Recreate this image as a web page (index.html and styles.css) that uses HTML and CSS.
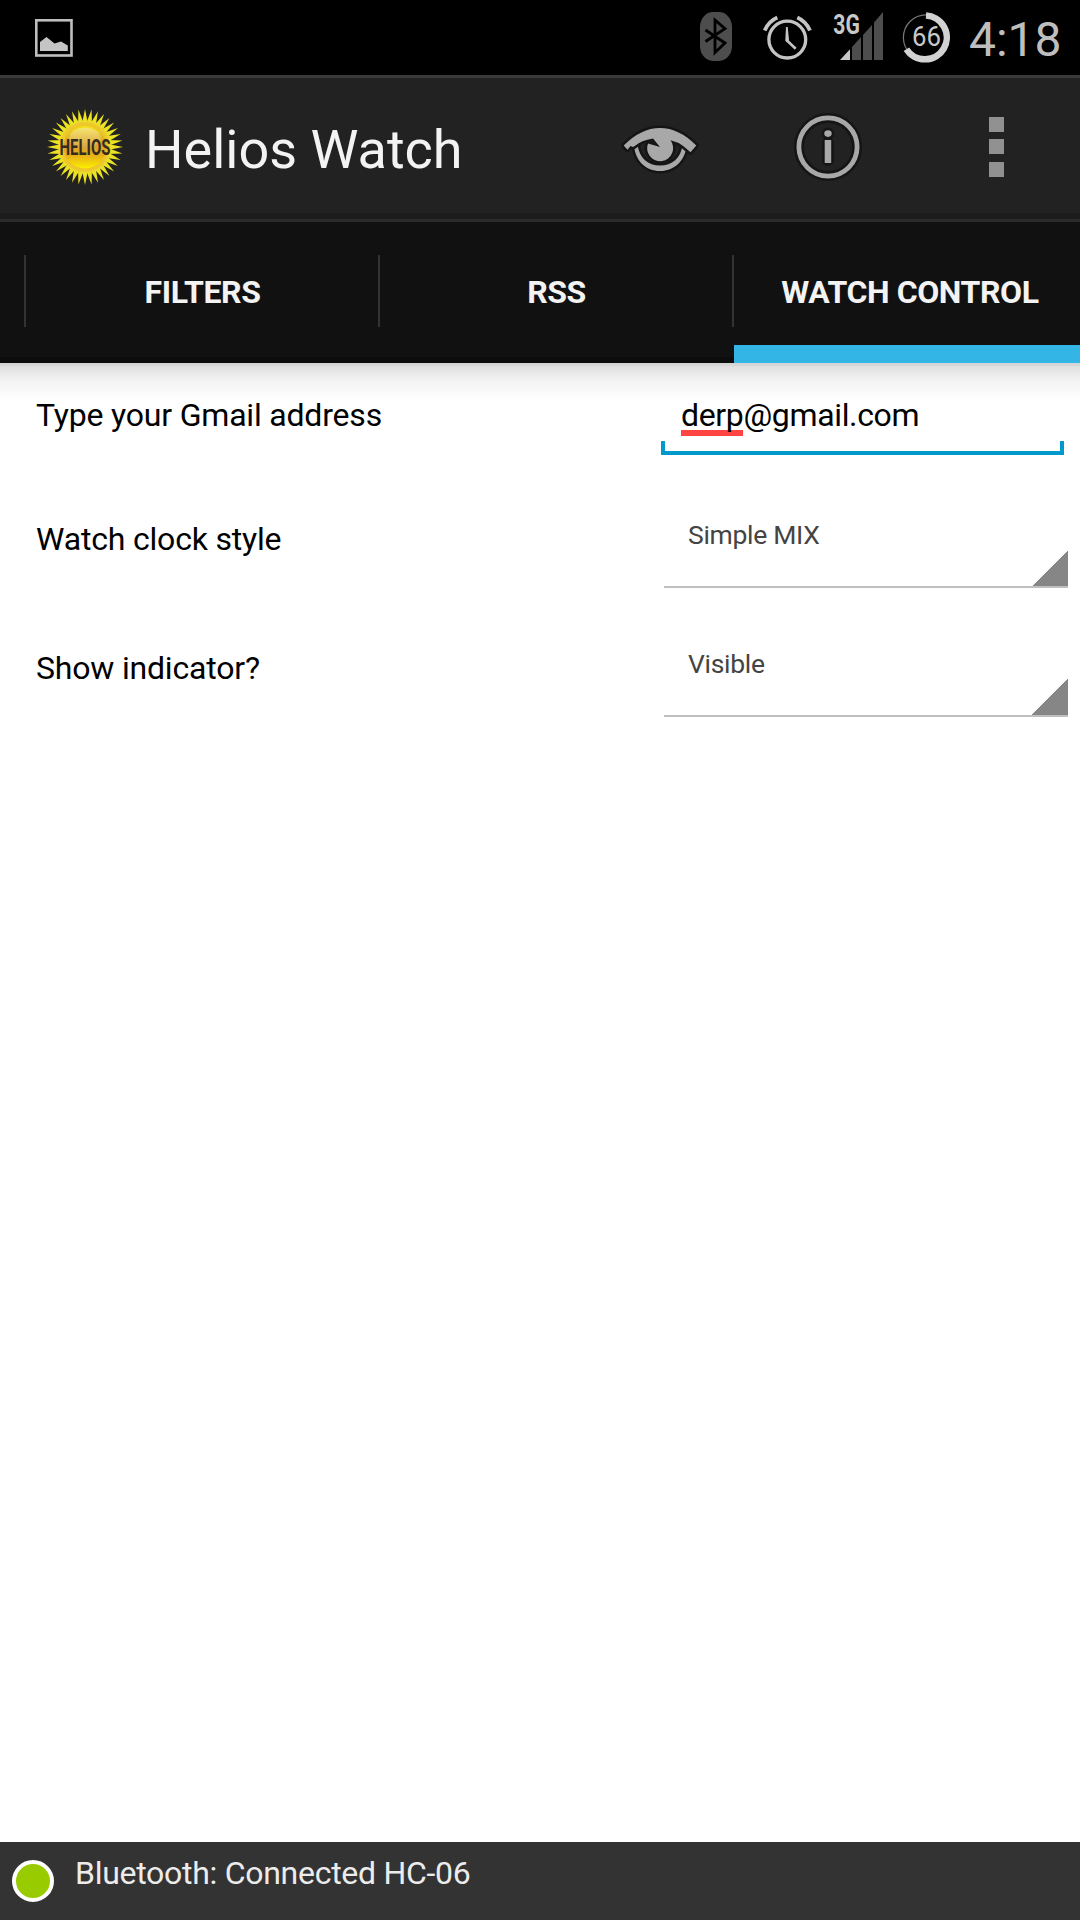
FILE: index.html
```html
<!DOCTYPE html>
<html lang="en">
<head>
<meta charset="utf-8">
<title>Helios Watch</title>
<link rel="stylesheet" href="styles.css">
</head>
<body>
<div class="status">
  <svg class="status-photo" width="40" height="75" viewBox="34 0 40 75"><rect x="36.3" y="20.3" width="35.2" height="35.2" fill="none" stroke="#bebebe" stroke-width="2.6"/><path d="M40 42L46.5 37L54.5 43.6L61 41.5L67.8 45.5V51H40Z" fill="#c4c4c4"/></svg>
  <svg width="32" height="75" viewBox="700 0 32 75"><rect x="700" y="12" width="32" height="49" rx="13" ry="15" fill="#4d4d4d"/><path d="M705.5 30L725 43L715 52.5V20L725 28.7L705.5 41.5" fill="none" stroke="#000" stroke-width="2.8"/></svg>
  <svg class="status-alarm" width="50" height="75" viewBox="762 0 50 75"><g fill="none" stroke="#c4c4c4" stroke-width="3.3"><circle cx="787.3" cy="39.6" r="18.4"/><path d="M764.7 30.5Q768.5 21.5 777.3 17.6M797.3 17.6Q806 21.5 810 30.5" stroke-width="3.8"/><path d="M787 40.5L795.7 48.7" stroke-width="2.6"/></g><path d="M786 27H787.7L789 40L786.6 42.3L785.3 40.5Z" fill="#c4c4c4"/></svg>
  <svg class="status-signal" width="52" height="75" viewBox="832 0 52 75"><text x="833.3" y="33.7" class="network" textLength="26.5" lengthAdjust="spacingAndGlyphs">3G</text><path d="M840 60L850 49.3V60Z" fill="#c8c8c8"/><path d="M852 60V47L861 37V60ZM863 60V35L872 25V60ZM874 60V22.5L883 12V60Z" fill="#4d4d4d"/></svg>
  <svg class="status-battery" width="52" height="75" viewBox="901 0 52 75"><circle cx="926" cy="37.5" r="22.6" fill="none" stroke="#777" stroke-width="1.2"/><path d="M926 15.6A21.9 21.9 0 1 1 906.4 49.2" fill="none" stroke="#d2d2d2" stroke-width="6.5"/><text x="926.4" y="46" class="charge" text-anchor="middle" textLength="29" lengthAdjust="spacingAndGlyphs">66</text></svg>
  <span class="clock">4:18</span>
</div>

<header class="bar">
  <svg class="logo" width="80" height="80" viewBox="-40 -40 80 80">
    <defs>
      <path id="ray" d="M-3 -23L0 -38L3 -23Z"/>
      <g id="rays"><use href="#ray"/><use href="#ray" transform="rotate(10)"/><use href="#ray" transform="rotate(20)"/></g>
      <g id="quarter"><use href="#rays"/><use href="#rays" transform="rotate(30)"/><use href="#rays" transform="rotate(60)"/></g>
      <radialGradient id="corona"><stop offset=".75" stop-color="#f0b828"/><stop offset="1" stop-color="#ecd030"/></radialGradient>
      <linearGradient id="ball" x1="0" y1="0" x2="0" y2="1"><stop offset="0" stop-color="#f2e010"/><stop offset=".45" stop-color="#d8a030"/><stop offset=".7" stop-color="#e8b018"/><stop offset="1" stop-color="#fcf000"/></linearGradient>
      <linearGradient id="gloss" x1="0" y1="0" x2="0" y2="1"><stop offset="0" stop-color="#f6e672"/><stop offset="1" stop-color="#d8a040"/></linearGradient>
    </defs>
    <g fill="#ece224"><use href="#quarter"/><use href="#quarter" transform="rotate(90)"/><use href="#quarter" transform="rotate(180)"/><use href="#quarter" transform="rotate(270)"/></g>
    <circle r="25.5" fill="url(#corona)"/><circle r="21.5" fill="url(#ball)"/><ellipse cy="-9" rx="15.5" ry="10.5" fill="url(#gloss)"/>
    <text class="logo-text" x="-25.5" y="8" textLength="51" lengthAdjust="spacingAndGlyphs">HELIOS</text>
  </svg>
  <h1 class="title">Helios Watch</h1>
  <svg width="80" height="60" viewBox="620 117 80 60">
    <g fill="#a8a8a8" stroke="#151515" stroke-width="5" stroke-linejoin="round" paint-order="stroke">
      <path d="M634 145C635 161 646 171 660 171C674 171 685 161 686.5 146L682.5 145C681 158 672 165.500 660 165.500C648 165.500 639.500 158 637.500 145Z"/>
      <path d="M623.700 145.500Q641 128 660 128Q679 128 696.300 145.500L690.500 152.300L683.500 146.300Q678 142 670.500 140.300A13 13 0 1 1 648 143.500L660 147L653 138.500Q641 140.500 635.500 145.500L633 147L630.500 146L627.500 149.700Z"/>
    </g>
  </svg>
  <svg class="info" width="70" height="70" viewBox="793 112 70 70"><g fill="none" stroke="#151515"><circle cx="828" cy="147" r="29.100" stroke-width="10"/><path d="M828 133.500V134M828 143V160" stroke-width="12" stroke-linecap="round"/></g><circle cx="828" cy="147" r="29.100" fill="none" stroke="#a8a8a8" stroke-width="4.800"/><ellipse cx="828" cy="133.600" rx="3.700" ry="3.300" fill="#a8a8a8"/><path d="M824.700 140H831.200V163H824.700Z" fill="#a8a8a8"/></svg>
  <svg class="more" width="15" height="60" viewBox="0 0 15 60"><path d="M0 0H15V15H0ZM0 22H15V37H0ZM0 45H15V60H0Z" fill="#919191"/></svg>
</header>

<nav class="tabs">
  <div class="tab">FILTERS</div>
  <div class="tab">RSS</div>
  <div class="tab active">WATCH CONTROL</div>
</nav>

<main class="form">
  <div class="row first"><span class="label">Type your Gmail address</span><div class="field"><span class="misspelt">derp</span>@gmail.com</div></div>
  <div class="row"><span class="label">Watch clock style</span><div class="spinner">Simple MIX</div></div>
  <div class="row"><span class="label">Show indicator?</span><div class="spinner">Visible</div></div>
</main>

<footer class="footer"><i class="led"></i><span class="connection">Bluetooth: Connected HC-06</span></footer>
</body>
</html>
```
FILE: styles.css
```css
* { box-sizing: border-box; }
body {
  margin: 0;
  height: 1920px;
  display: flex;
  flex-direction: column;
  background: #fff;
  color: #000;
  font: 32px/48px Roboto, sans-serif;
  white-space: nowrap;
}
svg { display: block; flex: none; overflow: visible; }

.status {
  height: 75px;
  flex: none;
  display: flex;
  padding-left: 34px;
  background: #000;
}
.status-photo { margin-right: 626px; }
.status-alarm { margin-left: 30px; }
.status-signal { margin-left: 20px; }
.status-battery { margin-left: 17px; }
.network { font: bold 28px Roboto, sans-serif; fill: #c8c8c8; }
.charge { font: 27px Roboto, sans-serif; fill: #c8c8c8; }
.clock { margin-left: 16px; color: #bebebe; font-size: 48px; line-height: 79px; }

.bar {
  height: 147px;
  flex: none;
  display: flex;
  align-items: center;
  padding: 0 76px 3px 45px;
  background: #222;
  border-top: 3px solid #3a3a3a;
  border-bottom: 3px solid #2a2a2a;
  box-shadow: inset 0 -6px #1c1c1c;
}
.logo-text { font: bold 22px Roboto, sans-serif; fill: #352c1e; }
.title {
  margin: 0;
  width: 495px;
  padding: 5px 0 0 20px;
  color: #f3f3f3;
  font-size: 54px;
  font-weight: 400;
}
.info { margin-left: 93px; }
.more { margin-left: 126px; }

.tabs {
  height: 141px;
  flex: none;
  display: grid;
  grid-template-columns: 354px 354px 348px;
  padding-left: 24px;
  background: #111;
  box-shadow: inset 0 -6px #0c0c0c;
}
.tab {
  text-align: center;
  padding: 46px 0 0 3px;
  color: #f3f3f3;
  font-weight: 700;
  letter-spacing: -0.4px;
  background: linear-gradient(#333, #333) 0 33px / 2px 72px no-repeat;
}
.active {
  padding-left: 8px;
  background: linear-gradient(#333, #333) 0 33px / 2px 72px no-repeat,
    linear-gradient(#33b5e5, #33b5e5) 2px 123px no-repeat;
}

.form {
  flex: 1;
  background: linear-gradient(#d6d6d6 0 3px, #e0e0e0 3px, #f3f3f3 18px, #fff 37px);
}
.row {
  height: 129px;
  display: flex;
  justify-content: space-between;
  padding: 0 12px 0 36px;
}
.label { padding-top: 37px; letter-spacing: -0.19px; }
.first { height: 115px; padding-right: 16px; }
.first .label { padding-top: 28px; }
.field {
  position: relative;
  width: 403px;
  height: 92px;
  padding: 28px 20px 0;
  letter-spacing: -0.35px;
}
.field::after {
  content: "";
  position: absolute;
  left: 0;
  right: 0;
  bottom: 0;
  height: 10px;
  border: 4px solid #09c;
  border-top: 0;
}
.misspelt {
  padding-bottom: 2px;
  background: linear-gradient(#f44, #f44) 0 100% / 100% 6px no-repeat;
}
.spinner {
  width: 404px;
  height: 110px;
  padding: 37px 24px 0;
  border-bottom: 2px solid #bfbfbf;
  background: linear-gradient(135deg, transparent 50%, #868686 50%) 100% 100% / 36px 36px no-repeat;
  color: #444;
  font-size: 26.500px;
  letter-spacing: -0.3px;
  line-height: 40px;
}

.footer {
  height: 78px;
  flex: none;
  display: flex;
  padding: 7px 12px;
  background: #333;
  color: #ececec;
}
.connection { letter-spacing: -0.28px; }
.led {
  width: 42px;
  height: 42px;
  margin: 11px 21px 0 0;
  border: 4px solid #fff;
  border-radius: 50%;
  background: #9c0;
}
```
